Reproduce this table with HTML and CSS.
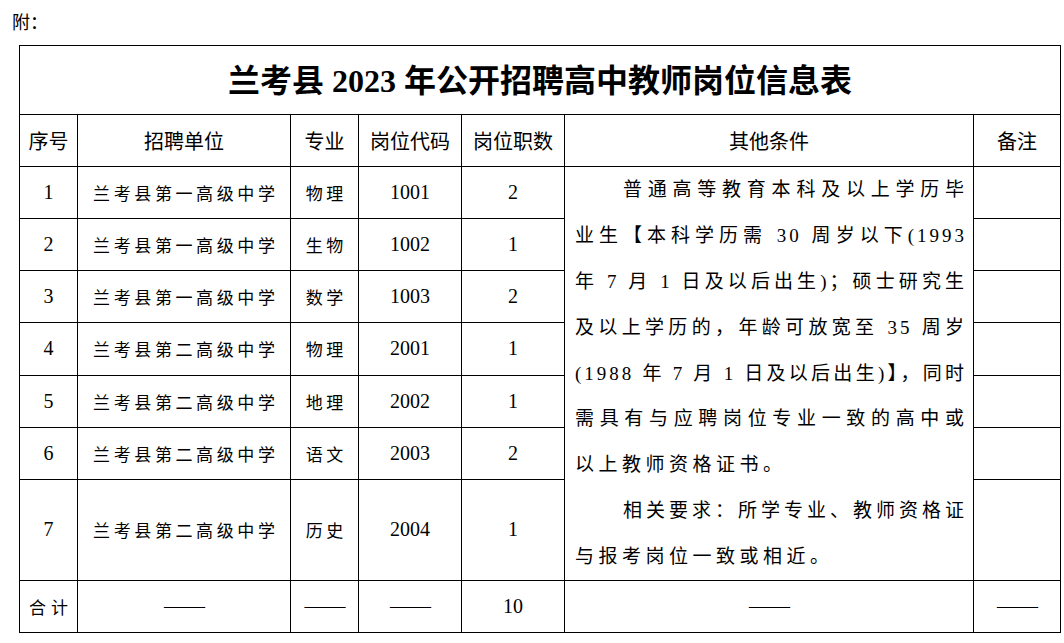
FILE: index.html
```html
<!DOCTYPE html>
<html lang="zh-CN">
<head>
<meta charset="utf-8">
<title>兰考县2023年公开招聘高中教师岗位信息表</title>
<link rel="stylesheet" href="styles.css">
</head>
<body>
<div class="note">附：</div>
<table class="sheet">
  <colgroup>
    <col class="c-no"><col class="c-unit"><col class="c-major"><col class="c-code"><col class="c-num"><col class="c-cond"><col class="c-rem">
  </colgroup>
  <tr class="r-title"><td colspan="7" class="title">兰考县 2023 年公开招聘高中教师岗位信息表</td></tr>
  <tr class="r-head">
    <th>序号</th><th>招聘单位</th><th>专业</th><th>岗位代码</th><th>岗位职数</th><th>其他条件</th><th>备注</th>
  </tr>
  <tr class="r-row">
    <td class="num">1</td><td class="cn">兰考县第一高级中学</td><td class="cn">物理</td><td class="num">1001</td><td class="num">2</td>
    <td class="cond" rowspan="7">
      <div class="jl indent">普通高等教育本科及以上学历毕</div>
      <div class="jl">业生【本科学历需 30 周岁以下(1993</div>
      <div class="jl">年 7 月 1 日及以后出生)；硕士研究生</div>
      <div class="jl">及以上学历的，年龄可放宽至 35 周岁</div>
      <div class="jl">(1988 年 7 月 1 日及以后出生)】，同时</div>
      <div class="jl">需具有与应聘岗位专业一致的高中或</div>
      <div class="ll">以上教师资格证书。</div>
      <div class="jl indent">相关要求：所学专业、教师资格证</div>
      <div class="ll">与报考岗位一致或相近。</div>
    </td>
    <td></td>
  </tr>
  <tr class="r-row">
    <td class="num">2</td><td class="cn">兰考县第一高级中学</td><td class="cn">生物</td><td class="num">1002</td><td class="num">1</td><td></td>
  </tr>
  <tr class="r-row">
    <td class="num">3</td><td class="cn">兰考县第一高级中学</td><td class="cn">数学</td><td class="num">1003</td><td class="num">2</td><td></td>
  </tr>
  <tr class="r-row">
    <td class="num">4</td><td class="cn">兰考县第二高级中学</td><td class="cn">物理</td><td class="num">2001</td><td class="num">1</td><td></td>
  </tr>
  <tr class="r-row">
    <td class="num">5</td><td class="cn">兰考县第二高级中学</td><td class="cn">地理</td><td class="num">2002</td><td class="num">1</td><td></td>
  </tr>
  <tr class="r-row">
    <td class="num">6</td><td class="cn">兰考县第二高级中学</td><td class="cn">语文</td><td class="num">2003</td><td class="num">2</td><td></td>
  </tr>
  <tr class="r-tall">
    <td class="num">7</td><td class="cn">兰考县第二高级中学</td><td class="cn">历史</td><td class="num">2004</td><td class="num">1</td><td></td>
  </tr>
  <tr class="r-row">
    <td class="cn total">合计</td><td class="dash">——</td><td class="dash">——</td><td class="dash">——</td><td class="num">10</td><td class="dash">——</td><td class="dash">——</td>
  </tr>
</table>
</body>
</html>
```

FILE: styles.css
```css
html, body {
  margin: 0;
  padding: 0;
  background: #fff;
  color: #000;
}
body {
  font-family: "Liberation Serif", "Noto Sans CJK SC", serif;
}
.note {
  height: 45px;
  box-sizing: border-box;
  padding: 8px 0 0 12px;
  font-family: "Noto Sans CJK SC", sans-serif;
  font-size: 18px;
  line-height: 26px;
}
.sheet {
  margin-left: 19px;
  width: 1041px;
  border-collapse: collapse;
  table-layout: fixed;
}
.c-no { width: 58px; }
.c-unit { width: 213px; }
.c-major { width: 68px; }
.c-code { width: 103px; }
.c-num { width: 103px; }
.c-cond { width: 409px; }
.c-rem { width: 87px; }
.sheet td, .sheet th {
  border: 1px solid #000;
  padding: 0;
  text-align: center;
  vertical-align: middle;
}
.r-title td { height: 64px; }
.r-head th { height: 51px; }
.r-row td { height: 51px; }
.r-tall td { height: 100px; }
.sheet td.title {
  font-family: "Liberation Serif", "Noto Sans CJK SC", serif;
  font-weight: 700;
  font-size: 32px;
  padding-bottom: 4px;
}
.sheet th {
  font-family: "Noto Sans CJK SC", sans-serif;
  font-weight: 400;
  font-size: 20px;
}
.num {
  font-size: 20px;
}
.cn {
  font-family: "Noto Sans CJK SC", sans-serif;
  font-size: 17px;
  letter-spacing: 3.6px;
  text-indent: 3.6px;
}
.total {
  letter-spacing: 5px;
  text-indent: 5px;
}
.dash {
  font-family: "Liberation Serif", serif;
  font-size: 21px;
  letter-spacing: -1px;
}
.sheet td.cond {
  vertical-align: top;
  text-align: left;
  padding: 0 6px 0 10px;
  font-size: 19px;
  letter-spacing: 3px;
}
.jl, .ll {
  line-height: 45.9px;
  height: 45.9px;
  white-space: nowrap;
  overflow: hidden;
}
.jl {
  text-align: justify;
  text-align-last: justify;
}
.ll {
  letter-spacing: 4.5px;
}
.indent {
  padding-left: 48px;
}
```
